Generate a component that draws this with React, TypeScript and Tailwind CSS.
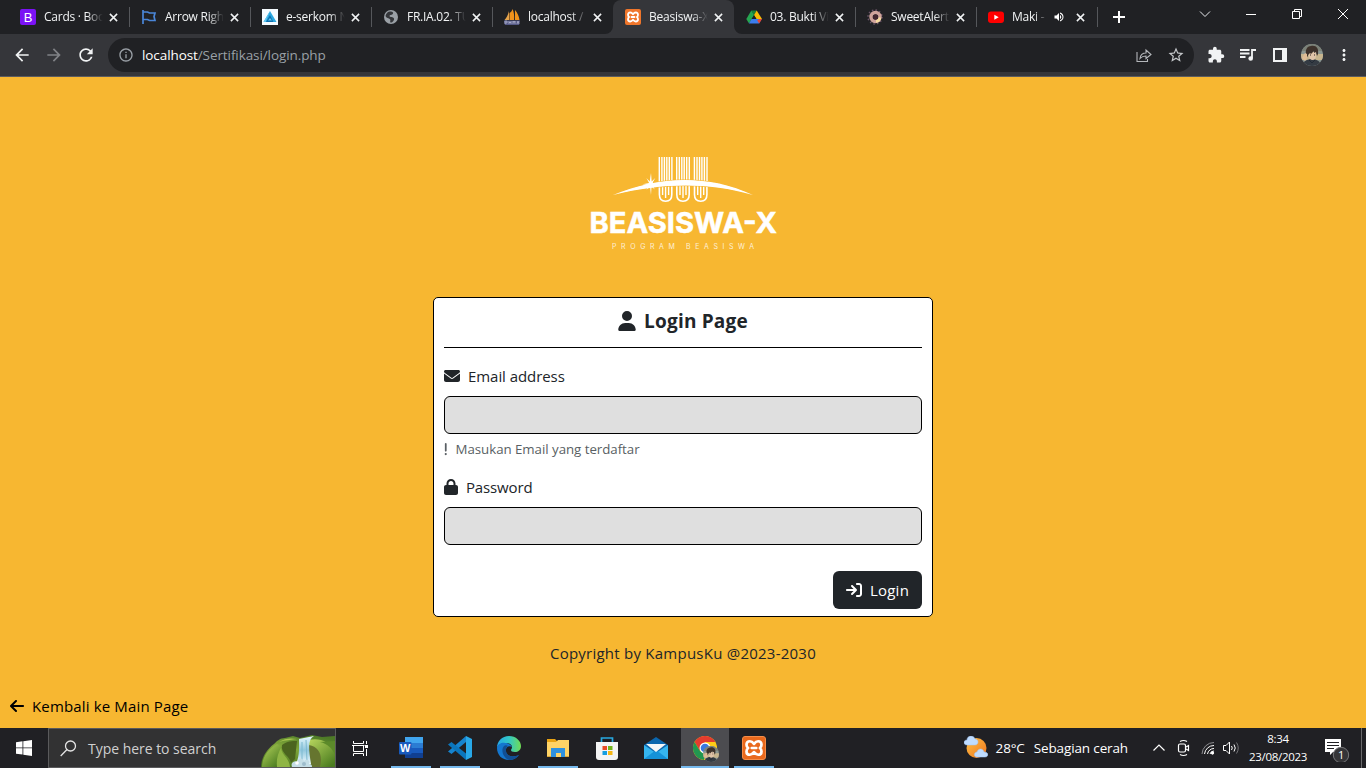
import React from "react";
import { FaUser, FaEnvelope, FaExclamation, FaLock, FaArrowRightToBracket, FaArrowLeft } from "react-icons/fa6";
import { MdArrowBack, MdArrowForward, MdRefresh, MdInfoOutline, MdStarBorder, MdExtension, MdMoreVert, MdVolumeUp } from "react-icons/md";

const BootstrapIcon = () => (
  <div className="flex h-4 w-4 items-center justify-center rounded-[2px] bg-[#7b12f5] font-['Liberation_Sans'] text-[13px] leading-none text-white">B</div>
);

const FlagIcon = () => (
  <svg viewBox="0 0 16 16" className="h-4 w-4" fill="none" stroke="#4a86d8" strokeWidth="1.700">
    <path d="M2 1v14M2 3h4.500l2 1H14l-1 3.500 1 4H8.500l-2-1H2" />
  </svg>
);

const SerkomIcon = () => (
  <svg viewBox="0 0 16 16" className="h-4 w-4">
    <rect width="16" height="16" fill="#f5fbff" />
    <path d="M8 2 14.500 13h-13z" fill="#2aa7e0" />
    <path d="M8 6l3.300 7H4z" fill="#0e6fae" />
    <path d="M8 2 3.500 13h-2zM8 9l2 2.500H6z" fill="#63c8ef" />
  </svg>
);

const GlobeIcon = () => (
  <svg viewBox="0 0 16 16" className="h-4 w-4">
    <circle cx="8" cy="8" r="7" fill="#9aa0a6" />
    <path d="M7 2.500c3 0 4 1.500 2.500 2.800C8.500 6.200 6.500 5.500 6.500 7s4 .5 4.500 2.500-2 4.500-3.500 4c-1-.5.5-2.300-.5-3.300S3 9 2.500 7C3 4.500 5 2.500 7 2.500z" fill="#34363a" />
    <circle cx="11.500" cy="5" r="1.500" fill="#9aa0a6" />
  </svg>
);

const PmaIcon = () => (
  <svg viewBox="0 0 16 16" className="h-4 w-4">
    <path d="M5 2v9H.5C2.500 9 4 6 5 2z" fill="#e6a44c" />
    <path d="M5.500 4C7 3 8 2 8.500 0c1.500 3 2 7 1.600 11H5.500zM11 1c2.500 3 4 6 4.500 10H11z" fill="#f0921b" />
    <path d="M0 11.500h16v1.500l-1 3H1L0 13z" fill="#555985" />
    <path d="M1 15v-3h2v2H1m4 1v-3m0 1.500h2M7 12v3m2 0v-3l1 1.500 1-1.500v3m2 0 1-3 1 3" stroke="#c8cae0" strokeWidth=".6" fill="none" />
  </svg>
);

const XamppIcon = ({ big = false }: { big?: boolean }) => (
  <div className={big ? "flex h-6 w-6 items-center justify-center rounded-[3px] border border-[#f58d48] bg-[#e9691d] text-white" : "flex h-4 w-4 items-center justify-center rounded-[2px] bg-[#f0762b] text-white"}>
    <svg viewBox="0 0 24 24" className={big ? "h-[18px] w-[18px]" : "h-3 w-3"} fill="none" stroke="currentColor" strokeWidth="3.600" strokeLinejoin="round" strokeLinecap="round">
      <path d="M12 6.500C10.500 4.500 9 3 6.500 3 3.500 3 2 5 2 7.500c0 2 .8 3.500 2.200 4.500C2.800 13 2 14.500 2 16.500 2 19 3.500 21 6.500 21c2.500 0 4-1.500 5.500-3.500 1.500 2 3 3.500 5.500 3.500 3 0 4.500-2 4.500-4.500 0-2-.8-3.500-2.200-4.500 1.400-1 2.200-2.500 2.200-4.500C22 5 20.500 3 17.500 3 15 3 13.500 4.500 12 6.500zM9 12h6" />
    </svg>
  </div>
);

const DriveIcon = () => (
  <svg viewBox="0 0 16 16" className="h-4 w-4">
    <path d="M5.300 1.500h5.400L8 6z" fill="#188038" />
    <path d="M5.300 1.500 8 6l-5 8.500L.3 10z" fill="#26a651" />
    <path d="M10.700 1.500 16 10h-5.500L8 6z" fill="#fbbc04" />
    <path d="M5.500 10h10.200L13 14.500H3z" fill="#3b7ded" />
    <path d="M13.200 10H16l-2.800 4.500-2-3z" fill="#ea4335" />
    <path d="M8 6.200 10.300 10H5.700z" fill="#202124" />
  </svg>
);

const SweetIcon = () => (
  <svg viewBox="0 0 16 16" className="h-4 w-4">
    <circle cx="8" cy="8" r="7" fill="none" stroke="#6c5568" strokeWidth="1.500" strokeDasharray="1.500 2.200" />
    <circle cx="8.500" cy="8" r="4.500" fill="none" stroke="#d0a49b" strokeWidth="3.400" />
    <path d="M9 12.500a4.500 4.500 0 0 0 4-4" stroke="#f5dba0" strokeWidth="2.500" fill="none" />
    <circle cx="8.500" cy="8" r="2.500" fill="#43272f" />
  </svg>
);

const YoutubeIcon = () => (
  <svg viewBox="0 0 16 16" className="h-4 w-4">
    <rect y="2.500" width="16" height="11.500" rx="3" fill="#f00" />
    <path d="m6.300 5.700 4.400 2.500-4.400 2.500z" fill="#fff" />
  </svg>
);

const Close = () => (
  <svg viewBox="0 0 10 10" className="h-[9px] w-[9px] shrink-0" stroke="#f1f3f4" strokeWidth="1.700">
    <path d="m1 1 8 8M9 1 1 9" />
  </svg>
);

type TabData = { icon: React.ReactNode; title: string; active?: boolean; sep?: boolean; sound?: boolean };

const tabs: TabData[] = [
  { icon: <BootstrapIcon />, title: "Cards · Boo", sep: true },
  { icon: <FlagIcon />, title: "Arrow Righ", sep: true },
  { icon: <SerkomIcon />, title: "e-serkom N", sep: true },
  { icon: <GlobeIcon />, title: "FR.IA.02. TU", sep: true },
  { icon: <PmaIcon />, title: "localhost /" },
  { icon: <XamppIcon />, title: "Beasiswa-X", active: true },
  { icon: <DriveIcon />, title: "03. Bukti Vi", sep: true },
  { icon: <SweetIcon />, title: "SweetAlert", sep: true },
  { icon: <YoutubeIcon />, title: "Maki -", sep: true, sound: true },
];

const Tab = ({ t }: { t: TabData }) => (
  <div className={`relative flex h-[34px] w-[121px] shrink-0 items-center pl-3 ${t.active ? "rounded-t-lg bg-[#35363a]" : ""}`}>
    {t.active && (
      <svg viewBox="0 0 137 8" className="absolute -left-2 bottom-0 h-2 w-[137px]" fill="#35363a">
        <path d="M0 8a8 8 0 0 0 8-8v8zM137 8a8 8 0 0 1-8-8v8z" />
      </svg>
    )}
    {t.icon}
    <div className={`ml-2 whitespace-nowrap text-[12px] leading-4 tracking-[-0.25px] text-[#f1f3f4] ${t.sound ? "w-[35px] mask-[linear-gradient(to_right,#000_65%,transparent)]" : "w-[60px] mask-[linear-gradient(to_right,#000_72%,transparent_98%)]"}`}>
      {t.title}
    </div>
    {t.sound && <MdVolumeUp className="mr-[11px] ml-1.5 h-3 w-3 shrink-0 text-white" />}
    {!t.sound && <div className="w-[5px] shrink-0" />}
    <Close />
    {t.sep && <div className="absolute -right-px h-5 w-px bg-[#55575b]" />}
  </div>
);

const Avatar = ({ className }: { className: string }) => (
  <svg viewBox="0 0 22 22" className={className}>
    <clipPath id="face"><circle cx="11" cy="11" r="11" /></clipPath>
    <g clipPath="url(#face)">
      <rect width="22" height="22" fill="#8b9691" />
      <path d="M0 10h22v6H0z" fill="#c8b58e" />
      <path d="M0 0h22v7H0z" fill="#7b8178" />
      <path d="M2 22c0-5 4-7 9-7s9 3 9 7z" fill="#343b43" />
      <path d="M8 8h7v4c0 2-1.500 4-3.500 4S8 14 8 12z" fill="#e0c4a8" />
      <path d="M6 12C3 7 6 2 10 2c5-1 8 2 7 8l-1 2-1-4-2 1V7l-3 3-1-1-2 2v2z" fill="#3e322b" />
      <path d="M1 14l3-5 2 1v4l-2 3z" fill="#e1bd95" />
      <path d="M9 11h1M13 11h1" stroke="#322" />
      <path d="m8 16 3 3 3-3" stroke="#222a35" fill="none" />
    </g>
  </svg>
);

const Browser = () => (
  <header className="flex h-[77px] shrink-0 flex-col border-b border-[#5b5c60] bg-[#35363a]">
    <div className="flex h-[34px] items-center bg-[#202124] pl-2">
      {tabs.map((t) => <Tab key={t.title} t={t} />)}
      <svg viewBox="0 0 12 12" className="ml-4 h-3 w-3" stroke="#fff" strokeWidth="2"><path d="M6 0v12M0 6h12" /></svg>
      <div className="mr-[17px] mb-1.5 ml-auto flex items-center">
        <svg viewBox="0 0 12 12" className="mr-[34px] h-3 w-3" fill="none" stroke="#e8eaed"><path d="m1 3.500 5 5 5-5" /></svg>
        <svg viewBox="0 0 12 12" className="mr-[34px] h-3 w-3" stroke="#fff"><path d="M1 6.500h10" /></svg>
        <svg viewBox="0 0 12 12" className="mr-[34px] h-3 w-3" fill="none" stroke="#fff"><path d="M1.500 3.500h7v7h-7zM3.500 3V1.500h7v7H9" /></svg>
        <svg viewBox="0 0 12 12" className="h-3 w-3" stroke="#fff"><path d="m1 1 10 10M11 1 1 11" /></svg>
      </div>
    </div>
    <div className="flex h-[42px] items-center pl-3">
      <MdArrowBack className="h-5 w-5 text-[#f1f3f4]" />
      <MdArrowForward className="ml-3 h-5 w-5 text-[#808286]" />
      <MdRefresh className="ml-3 h-5 w-5 text-[#f1f3f4]" />
      <div className="ml-3 flex h-[34px] w-[1086px] items-center rounded-full bg-[#202124] pr-[9px] pl-2.5">
        <MdInfoOutline className="h-4 w-4 text-[#9aa0a6]" />
        <div className="ml-2 text-[13.500px] tracking-[-0.09px] text-[#9aa0a6]"><span className="text-white">localhost</span>/Sertifikasi/login.php</div>
        <svg viewBox="0 0 16 16" className="ml-auto h-4 w-4" fill="none" stroke="#b4b7bb" strokeWidth="1.100">
          <path d="M1 5v9.500h10.500V12M4 11.500c.5-4 2.500-5.500 6-5.500V3l5 4.500-5 4V9C7 9 5.500 9.800 4 11.500z" />
        </svg>
        <MdStarBorder className="ml-[15px] h-[18px] w-[18px] text-[#c4c7ca]" />
      </div>
      <MdExtension className="ml-[13px] h-[18px] w-[18px] text-[#f1f3f4]" />
      <svg viewBox="0 0 16 14" className="ml-[15px] h-3.5 w-4 text-[#f1f3f4]" fill="none" stroke="currentColor" strokeWidth="1.800"><path d="M0 2h9.500M0 5.500h9.500M0 9h5.500M12 10V2h4" /><circle cx="10.700" cy="10.500" r="2.300" fill="currentColor" stroke="none" /></svg>
      <svg viewBox="0 0 14 14" className="ml-[17px] h-3.5 w-3.5"><path fill="#f1f3f4" fillRule="evenodd" d="M0 0h14v14H0zM2 2v10h7V2z" /></svg>
      <Avatar className="ml-[14px] h-[22px] w-[22px]" />
      <MdMoreVert className="ml-[12px] h-[18px] w-[18px] text-[#f1f3f4]" />
    </div>
  </header>
);

const bars = [-6.300, -3.700, -1.200, 1.200, 3.700, 6.300];

const Logo = () => (
  <svg viewBox="0 0 210 115" className="ml-1 h-[115px] w-[210px]" fill="#fff">
    {[85.600, 103, 120.700].map((x) => (
      <g key={x}>
        {bars.map((o) => <rect key={o} x={x + o - 0.700} y="12" width="1.400" height="25" />)}
        <path d={`M${x - 6.200} 39v10.500q0 6.700 6.200 6.700t6.200-6.700V39`} fill="none" stroke="#fff" strokeWidth="1.600" />
        <path d={`M${x - 3} 39v11M${x} 39v14M${x + 3} 39v11`} fill="none" stroke="#fff" strokeWidth="1.400" />
      </g>
    ))}
    <path d="M33 50C76 32 126 28 173 50 126 37 83 38 33 50z" stroke="#f7b731" strokeWidth="1" />
    <path d="M33 50C76 32 126 28 173 50 126 37 83 38 33 50z" />
    <path d="m71 28 .7 8.500 3.600-3.400-2.900 4.800 6.600 1.300-6.600 1 2.400 4.400-3.300-3.200L71 50l-.9-8.600-3.700 3.300 2.700-4.500-6.600-1 6.600-1.300L66.400 33l3.300 3.500z" />
    <circle cx="71" cy="39.200" r="2.400" />
    <text x="9.500" y="87.800" textLength="187.500" lengthAdjust="spacingAndGlyphs" fontFamily="Inter, sans-serif" fontWeight="700" fontSize="29" stroke="#fff" strokeWidth=".5">BEASISWA-X</text>
    <text x="32" y="104" textLength="146" fontFamily="Inter, sans-serif" fontSize="7" fillOpacity=".8"><tspan textLength="142" lengthAdjust="spacing">PROGRAM BEASISWA</tspan></text>
  </svg>
);

const LoginPage = () => (
  <main className="flex flex-1 flex-col items-center bg-[#f7b731] pt-[68px] text-[#212529]">
    <Logo />
    <form className="mt-[37px] flex h-80 w-[500px] shrink-0 flex-col rounded-[5px] border border-black bg-white px-2.5">
      <h1 className="flex h-[50px] items-center justify-center gap-2 border-b border-black pb-0.5 text-[19px] font-bold tracking-[0.2px]"><FaUser className="mb-px h-5 w-[18px]" />Login Page</h1>
      <label className="mt-4 flex h-6 items-center gap-2 text-[15px] tracking-[-0.06px]"><FaEnvelope className="h-4 w-4" />Email address</label>
      <input className="mt-2 h-[38px] rounded-md border border-black bg-[#dfdfdf] px-3 outline-none" />
      <div className="mt-[6px] flex h-[19px] items-center gap-2 text-[13.300px] tracking-[-0.04px] text-[#595f64]"><FaExclamation className="mb-px h-3.5 w-[3.500px]" />Masukan Email yang terdaftar</div>
      <label className="mt-4 flex h-6 items-center gap-2 text-[15px] tracking-[-0.15px]"><FaLock className="h-4 w-3.5" />Password</label>
      <input type="password" className="mt-2 h-[38px] rounded-md border border-black bg-[#dfdfdf] px-3 outline-none" />
      <button type="button" className="mt-[26px] flex h-[38px] w-[89px] items-center justify-center gap-2 self-end rounded-md bg-[#212529] text-[15px] tracking-[0.25px] text-white"><FaArrowRightToBracket className="h-4 w-4" />Login</button>
    </form>
    <p className="mt-6 text-[15px] leading-6 tracking-[0.24px]">Copyright by KampusKu @2023-2030</p>
    <a className="mt-[29px] flex items-center gap-2 self-start pl-2.5 text-[15px] leading-6 tracking-[0.15px] text-black"><FaArrowLeft className="h-4 w-3.5" />Kembali ke Main Page</a>
  </main>
);

const Waterfall = () => (
  <svg viewBox="0 0 75 32" className="ml-auto h-8 w-[75px] self-end">
    <defs>
      <linearGradient id="hill" x1=".7" x2=".2" y2="1"><stop stopColor="#4d7a26" /><stop offset=".45" stopColor="#7fa63a" /><stop offset="1" stopColor="#4a751f" /></linearGradient>
      <linearGradient id="slope" x2=".8" y2="1"><stop stopColor="#b8d65e" /><stop offset="1" stopColor="#4c7d20" /></linearGradient>
      <linearGradient id="water" y2="1" x2="0"><stop stopColor="#e9faff" /><stop offset=".5" stopColor="#91c7dd" /><stop offset="1" stopColor="#eefaff" /></linearGradient>
    </defs>
    <path d="M1 32C1 23 7 14 14 9c3-3 6-6 11-6l8-2 7 2 12-3 10 2 13-1v31z" fill="url(#hill)" />
    <path d="M2 32C2 22 9 13 17 9c5 1 2 8 1 12s-2 7-1 11z" fill="url(#slope)" />
    <path d="M22 10c5-4 10-4 15-4l-2 18-4 4c-1-7-11-10-9-18z" fill="#4b641f" />
    <path d="M17 32c-1-7 1-14 4-19 1 8 8 9 9 19z" fill="#8fb544" />
    <path d="M19 7c6-4 12-4 18-3-5 1-12 1-18 3z" fill="#a9c751" />
    <path d="M48 8c8-3 13 4 13 12l2 12H48z" fill="#66752f" />
    <path d="M49 5c10-3 21 2 26 11v16H60c3-12-1-20-11-22z" fill="url(#slope)" />
    <path d="M60 7c8 2 12 6 15 13V6z" fill="#5c8a2a" />
    <path d="M39 4 54 1c-7 4-5 14-3 28H36c4-9 3-18 3-25z" fill="url(#water)" />
    <path d="M42 7v19M46 5l1 21" stroke="#7db9d0" strokeWidth="1" />
    <path d="M32 32c-2-5 4-7 5-5 1-5 6-4 7-1 3-3 7 0 5 3 3 0 3 2 3 3z" fill="#c4dde5" />
    <circle cx="37" cy="28" r="1.800" fill="#fff" /><circle cx="44" cy="29" r="2" fill="#9dbccb" />
  </svg>
);

const Word = () => (
  <svg viewBox="0 0 24 24" className="h-6 w-6">
    <path d="M6 1h18v6H6z" fill="#41a5ee" /><path d="M6 7h18v5H6z" fill="#2b7cd3" /><path d="M6 12h18v5H6z" fill="#185abd" /><path d="M6 17h18v5H6z" fill="#103f91" />
    <rect y="6" width="12.500" height="12.500" rx="1" fill="#185abd" />
    <text x="1" y="16" fontFamily="Liberation Sans" fontWeight="700" fontSize="11" fill="#fff">W</text>
  </svg>
);
const Code = () => (
  <svg viewBox="0 0 24 24" className="h-6 w-6">
    <path d="m18 0 6 3v18l-6 3z" fill="#28a8e8" />
    <path d="m18 0 0 6L3.500 18 0 15.500z" fill="#1684cf" />
    <path d="M0 8.500 3.500 6 18 17.500V24z" fill="#0b76bd" />
  </svg>
);
const Edge = () => (
  <svg viewBox="0 0 24 24" className="h-6 w-6">
    <defs><linearGradient id="edgeTop" x2="1"><stop stopColor="#25a7e8" /><stop offset=".5" stopColor="#32c7c6" /><stop offset="1" stopColor="#70dc54" /></linearGradient></defs>
    <path d="M0 12C0 5 5 0 12 0s12 5 12 10c0 4-3 6-6 6-3 0-4-1-4-2 0-.8 1-1 1-3 0-2-2-4-6-4-5 0-9 3-9 5z" fill="url(#edgeTop)" />
    <path d="M0 12c0-3 4-6 8-5 4 0 6 2 7 4-4-2-7 1-6 5s6 6 13 3c-2 3-6 5-10 5C5 24 0 19 0 12z" fill="#1477cf" />
    <path d="M7 10c-3 3-2 11 5 14 4 0 8-2 10-5-7 3-12 1-13-4 0-2 0-4 2-5-1-1-3-1-4 0z" fill="#114f94" />
  </svg>
);
const Folder = () => (
  <svg viewBox="0 0 24 24" className="h-6 w-6">
    <path d="M1 3h8l2 2h12v15H1z" fill="#e9a313" /><path d="M1 6h9l2-2h11v17H1z" fill="#ffd366" />
    <path d="M5 12h14v9h-4v-4h-5v4H5z" fill="#2f91df" /><path d="M1 20h4v1H1zM19 20h4v1h-4z" fill="#dca638" />
  </svg>
);
const Store = () => (
  <svg viewBox="0 0 24 24" className="h-6 w-6">
    <path d="M6.500 7V2h11v5" fill="none" stroke="#27a8e0" strokeWidth="1.700" />
    <path d="M1 6h22v15q0 3-3 3H4q-3 0-3-3z" fill="#f4f4f4" />
    <path d="M7.500 10H12v4H7.500z" fill="#e94d26" /><path d="M13 10h4.500v4H13z" fill="#72b51c" /><path d="M7.500 15H12v4H7.500z" fill="#159ee1" /><path d="M13 15h4.500v4H13z" fill="#f7b713" />
  </svg>
);
const Mail = () => (
  <svg viewBox="0 0 24 24" className="h-6 w-6">
    <path d="M0 9 12 1l12 8v14H0z" fill="#0b66ad" /><path d="M0 9l12 8 12-8v14H0z" fill="#35b5ef" /><path d="m0 23 12-9 12 9z" fill="#1592d9" />
    <path d="M2 8h20l-10 8z" fill="#f4f6f7" />
  </svg>
);
const Chrome = () => (
  <div className="relative h-6 w-6">
    <svg viewBox="0 0 24 24" className="h-6 w-6">
      <circle cx="12" cy="12" r="12" fill="#ffcc18" />
      <path d="M1.600 6A12 12 0 0 1 22.400 6H12l-5 9z" fill="#e43c2e" />
      <path d="M1.600 6 7 15l5 3-1 6A12 12 0 0 1 1.600 6z" fill="#229650" />
      <circle cx="12" cy="12" r="5.500" fill="#fff" /><circle cx="12" cy="12" r="4.300" fill="#3979df" />
    </svg>
    <Avatar className="absolute top-[10px] left-[10px] h-4 w-4" />
  </div>
);

const apps = [
  { icon: <Word />, open: true }, { icon: <Code />, open: true }, { icon: <Edge /> }, { icon: <Folder />, open: true },
  { icon: <Store /> }, { icon: <Mail /> }, { icon: <Chrome />, open: true, active: true }, { icon: <XamppIcon big />, open: true },
];

const Weather = () => (
  <svg viewBox="0 0 24 24" className="h-6 w-6">
    <defs><linearGradient id="sun" x2="1" y2="1"><stop stopColor="#ffbf42" /><stop offset="1" stopColor="#ee7520" /></linearGradient></defs>
    <circle cx="12.500" cy="12" r="10" fill="url(#sun)" />
    <path d="M3 9C-1 9-1 4 3 4c0-5 7-5 8-1 4 0 4 6 0 6zM13 21c-4 0-3-5 0-5 1-4 6-4 7 0 5 0 5 5 1 5z" fill="#bfdcff" stroke="#a1c5f5" strokeWidth=".5" />
  </svg>
);

const Taskbar = () => (
  <footer className="flex h-10 shrink-0 items-center bg-[#202024] text-white">
    <div className="flex h-10 w-12 items-center justify-center">
      <svg viewBox="0 0 16 16" className="h-4 w-4" fill="#fff"><path d="M0 2.200 6.500 1.300v6.200H0zM7.300 1.200 16 0v7.500H7.300zM0 8.300h6.500v6.300L0 13.700zM7.300 8.300H16V16l-8.700-1.200z" /></svg>
    </div>
    <div className="flex h-10 w-72 items-center border border-[#5a5a5c] bg-[#323233] pl-[11px]">
      <svg viewBox="0 0 17 17" className="h-[17px] w-[17px]" fill="none" stroke="#e4e4e4" strokeWidth="1.300"><circle cx="10.500" cy="6" r="5" /><path d="M7 9.500.7 16" /></svg>
      <span className="ml-[11px] text-[14px] tracking-[-0.03px] whitespace-nowrap text-[#d0d0d0]">Type here to search</span>
      <Waterfall />
    </div>
    <div className="flex h-10 w-12 items-center justify-center">
      <svg viewBox="0 0 17 15" className="h-[15px] w-[17px]" fill="none" stroke="#fff"><path d="M1.500 0v2.500h10V0M0 4.500h12.500M1.500 4.500v6h10v-6M1.500 15v-2.500h10V15M14.500 0v3M14.500 8v7" /><path d="M13 4h3v3h-3z" fill="#fff" stroke="none" /></svg>
    </div>
    <div className="ml-[3px] flex gap-px">
      {apps.map((a, i) => (
        <div key={i} className={`flex h-10 w-12 flex-col items-center justify-end ${a.active ? "bg-[#4c4c50]" : ""}`}>
          <div className="mb-[6px]">{a.icon}</div>
          <div className={`h-0.5 ${a.active ? "w-12" : "w-10"} ${a.open ? "bg-[#76b9ed]" : ""}`} />
        </div>
      ))}
    </div>
    <div className="ml-auto flex h-10 items-center">
      <Weather />
      <span className="ml-2 text-[13.500px] tracking-[-0.15px] whitespace-nowrap">28°C</span>
      <span className="ml-[9px] text-[13.500px] tracking-[-0.13px] whitespace-nowrap">Sebagian cerah</span>
      <svg viewBox="0 0 12 12" className="ml-[25px] h-3 w-3" fill="none" stroke="#fff" strokeWidth="1.200"><path d="m.5 8.500 5.500-5.500 5.500 5.500" /></svg>
      <svg viewBox="0 0 14 18" className="ml-3 h-[18px] w-3.5" fill="none" stroke="#fff" strokeWidth="1.200"><rect x="1.500" y="5" width="7" height="8" rx="1.500" /><path d="m9 8 2.500-1.500v5L9 10M3 2.500q3.500-2 7 0M3 15.500q3.500 2 7 0" /></svg>
      <svg viewBox="0 0 14 14" className="ml-[10px] h-3.5 w-3.5" fill="none" stroke="#fff"><path d="M1 13A12 12 0 0 1 13 1.500" stroke="#8c8c90" /><path d="M3.500 13A9.500 9.500 0 0 1 13 4.500M6.500 13A6.500 6.500 0 0 1 13 7.500M9 13a4 4 0 0 1 4-3" /><circle cx="11.500" cy="12" r="1.200" fill="#fff" /></svg>
      <svg viewBox="0 0 17 14" className="ml-[8px] h-3.5 w-[17px]" fill="none" stroke="#fff"><path d="M.5 4.500H3L6.500 1v12L3 9.500H.5zM8.500 5q1.500 2 0 4M11 3.500q2.500 3.500 0 7" /><path d="M13.500 1.500q3.500 5.500 0 11" stroke="#747478" /></svg>
      <div className="ml-[8px] w-[60px] text-center text-[11.500px] leading-[18px] tracking-[-0.3px] whitespace-nowrap"><div>8:34</div><div>23/08/2023</div></div>
      <div className="relative ml-[13px] h-7 w-[30px]">
        <svg viewBox="0 0 30 28" className="h-7 w-[30px]"><path d="M4 5h16v13h-8l-3 3v-3H4z" fill="#fff" /><path d="M6 8.500h12M6 11.500h12M6 14.500h7" stroke="#202024" /><circle cx="20" cy="21" r="7.700" fill="#353538" stroke="#77777a" /></svg>
        <span className="absolute top-[13px] left-[17px] text-[11px] leading-4">1</span>
      </div>
      <div className="ml-[10px] h-10 w-[5px] border-l border-[#69696b]" />
    </div>
  </footer>
);

export default function App() {
  return (
    <div className="flex h-[768px] w-[1366px] flex-col overflow-hidden font-['Open_Sans','Noto_Sans',sans-serif]">
      <Browser />
      <LoginPage />
      <Taskbar />
    </div>
  );
}
